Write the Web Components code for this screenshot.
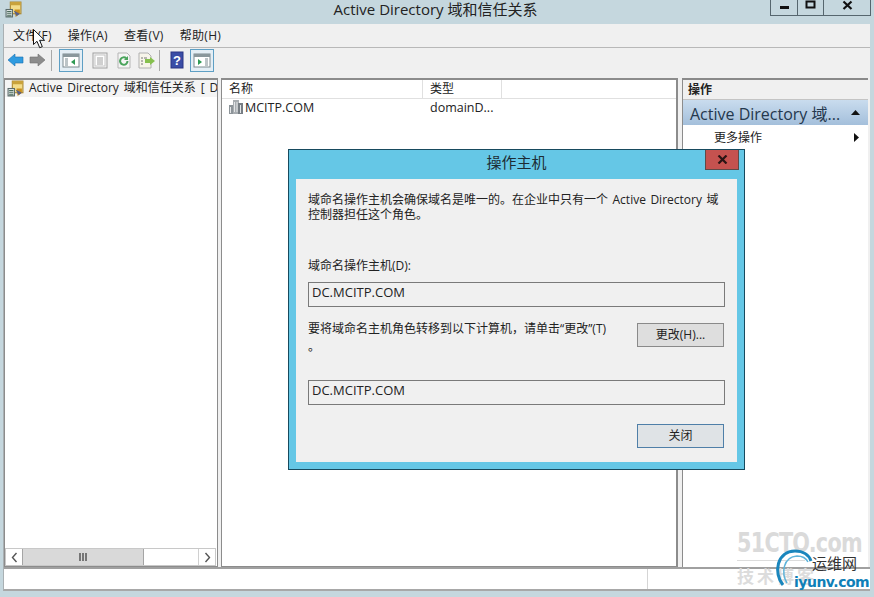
<!DOCTYPE html>
<html>
<head>
<meta charset="utf-8">
<title>Active Directory 域和信任关系</title>
<style>
  html, body { margin: 0; padding: 0; }
  body {
    width: 874px;
    height: 597px;
    overflow: hidden;
    position: relative;
    background: #c5d7de;
    color: #222;
    font: 12px "Open Sans", "Noto Sans CJK SC", sans-serif;
  }
</style>
</head>
<body>
<mmc-window>
  <tree-pane slot="left"></tree-pane>
  <list-pane slot="middle"></list-pane>
  <actions-pane slot="right"></actions-pane>
</mmc-window>

<fsmo-dialog>
  <p>域命名操作主机会确保域名是唯一的。在企业中只有一个 Active Directory 域控制器担任这个角色。</p>
</fsmo-dialog>

<blog-mark></blog-mark>
<mouse-cursor></mouse-cursor>

<script>
// snap-in icon, used in the caption and the tree
const adIcon = (s) => `<svg width="${s}" height="${s}" viewBox="0 0 16 16">
  <rect x="5" y="1" width="10" height="11" fill="#f3dc8a" stroke="#a8852e"/>
  <rect x="5" y="1" width="10" height="3" fill="#c9a23c"/>
  <path d="M9 8l5 0 0 4-4 3z" fill="#c98f1c"/>
  <path d="M8 9l6 3-3 2z" fill="#57608c"/>
  <rect x="1" y="8" width="6" height="7" fill="#dfe6e6" stroke="#5a6a6a"/>
  <path d="M2 10h4M2 12h4M2 14h4" stroke="#4a6a5a"/>
</svg>`;

class MmcWindow extends HTMLElement {
  constructor() {
    super();
    this.attachShadow({ mode: 'open' });
  }
  connectedCallback() {
    this.shadowRoot.innerHTML = `
    <style>
      :host { display: flex; flex-direction: column; width: 874px; height: 597px; }
      .caption { height: 24px; display: flex; position: relative; flex: none; }
      .caption .ico { margin: 1px 0 0 5px; height: 16px; }
      .caption .title {
        position: absolute; left: 0; right: 3px; top: 0; text-align: center;
        font-size: 15px; line-height: 19px; color: #222;
      }
      .caps {
        position: absolute; right: 3px; top: 0; height: 15px; display: flex;
        border: 1px solid #56666e; border-top: 0;
      }
      .caps div { display: flex; align-items: center; justify-content: center; border-left: 1px solid #56666e; height: 15px; }
      .caps div:first-child { border-left: 0; }
      .client {
        flex: 1; margin: 0 4px 6px 3px; display: flex; flex-direction: column;
        background: #f0f0f0; border-left: 1px solid #a9b0b3; border-bottom: 2px solid #a8a8a8; min-height: 0;
      }
      .menu {
        height: 21px; padding-bottom: 2px; flex: none; display: flex; gap: 16px; padding-left: 9px; align-items: center;
        border-bottom: 1px solid #b8b8b8; font-size: 12px; letter-spacing: .3px; color: #222;
      }
      .tools { height: 29px; padding-top: 1px; flex: none; display: flex; align-items: flex-start; padding-left: 2px; }
      .panes { flex: 1; display: flex; min-height: 0; }
      .left { width: 214px; flex: none; display: flex; }
      .mid { width: 457px; margin-left: 3px; flex: none; display: flex; }
      .right { width: 186px; margin-left: 4px; flex: none; display: flex; }
      ::slotted(*) { flex: 1; }
      .status { height: 20px; flex: none; background: #fff; border-top: 2px solid #a0a0a0; display: flex; justify-content: flex-end; }
      .status i { width: 222px; border-left: 1px solid #d5d5d5; }
      .sep { width: 1px; height: 21px; background: #a9a9a9; margin-top: 1px; flex: none; }
    </style>
    <div class="caption">
      <div class="ico">${adIcon(17)}</div>
      <div class="title">Active Directory 域和信任关系</div>
      <div class="caps">
        <div style="width:26px"><svg width="11" height="15"><rect x="1" y="6" width="9" height="3" fill="#111"/></svg></div>
        <div style="width:25px"><svg width="11" height="15"><rect x="1.5" y="1.5" width="8" height="6" fill="none" stroke="#111" stroke-width="2"/></svg></div>
        <div style="width:46px"><svg width="11" height="15"><path d="M1.5 1.5l8 7.5M9.5 1.5l-8 7.5" stroke="#111" stroke-width="2.2"/></svg></div>
      </div>
    </div>
    <div class="client">
      <div class="menu"><span>文件(F)</span><span>操作(A)</span><span>查看(V)</span><span>帮助(H)</span></div>
      <div class="tools">
        <tool-icon kind="back"></tool-icon>
        <tool-icon kind="forward" style="margin-left:-4px"></tool-icon>
        <div class="sep" style="margin-left:3px"></div>
        <tool-icon kind="tree" active style="margin-left:7px"></tool-icon>
        <tool-icon kind="props" style="margin-left:5px"></tool-icon>
        <tool-icon kind="refresh" style="margin-left:1px"></tool-icon>
        <tool-icon kind="export" style="margin-left:-1px"></tool-icon>
        <div class="sep" style="margin-left:2px"></div>
        <tool-icon kind="help" style="margin-left:5px"></tool-icon>
        <tool-icon kind="action" active style="margin-left:2px"></tool-icon>
      </div>
      <div class="panes">
        <div class="left"><slot name="left"></slot></div>
        <div class="mid"><slot name="middle"></slot></div>
        <div class="right"><slot name="right"></slot></div>
      </div>
      <div class="status"><i></i></div>
    </div>`;
  }
}
customElements.define('mmc-window', MmcWindow);

class ToolIcon extends HTMLElement {
  constructor() {
    super();
    this.attachShadow({ mode: 'open' });
  }
  connectedCallback() {
    const glyphs = {
      back: '<path d="M1 10l7-6v3h8v6H8v3z" fill="#2f9be0" stroke="#1a6fb0" stroke-width=".6"/>',
      forward: '<path d="M19 10l-7-6v3H4v6h8v3z" fill="#8c8c8c" stroke="#6e6e6e" stroke-width=".6"/>',
      tree: '<rect x="3" y="4" width="16" height="13" fill="#fff" stroke="#7d8a90"/><rect x="3" y="4" width="16" height="3" fill="#8a979c"/><path d="M5 9h3M5 11h3M5 13h3M5 15h3" stroke="#7a8a90"/><path d="M15 9l-4 3 4 3z" fill="#2f9a55"/>',
      props: '<rect x="4" y="3" width="14" height="15" fill="#f4f4f4" stroke="#a0a0a0"/><rect x="6" y="5" width="10" height="11" fill="#fff" stroke="#c5c5c5"/><path d="M8 8h6M8 10h6M8 12h6M8 14h6" stroke="#a0a0a0"/>',
      refresh: '<path d="M5 3h9l3 3v12H5z" fill="#f5f5f5" stroke="#b5b5b5"/><path d="M14.500 11a3.700 3.700 0 1 1-1.200-2.700" fill="none" stroke="#4aa45c" stroke-width="2"/><path d="M15 6v4h-4z" fill="#4aa45c"/>',
      export: '<path d="M4 3h9l3 3v12H4z" fill="#f7f5ea" stroke="#b0b0b0"/><path d="M6 8h2M6 11h2M6 14h2M9 8h3" stroke="#777"/><path d="M10 9h5V7l5 4-5 4v-2h-5z" fill="#86c04e"/>',
      help: '<rect x="5" y="2" width="12" height="16" fill="#3a4da6" stroke="#2a3584"/><text x="11" y="15" text-anchor="middle" font-family="Liberation Sans" font-size="13" font-weight="700" fill="#fff">?</text>',
      action: '<rect x="3" y="4" width="16" height="13" fill="#fff" stroke="#7d8a90"/><rect x="3" y="4" width="16" height="3" fill="#8a979c"/><path d="M14 9h3M14 11h3M14 13h3M14 15h3" stroke="#7a8a90"/><path d="M7 9l4 3-4 3z" fill="#2f9a55"/>',
    };
    const kind = this.getAttribute('kind');
    this.shadowRoot.innerHTML = `
    <style>
      :host { display: block; width: 23px; height: 23px; flex: none; }
      :host([active]) { width: 24px; background: #e4eef5; outline: 1px solid #5e9fc4; outline-offset: -1px; }
      svg { display: block; margin: 1px; }
    </style>
    <svg width="21" height="21" viewBox="0 0 21 21">${glyphs[kind] || ''}</svg>`;
  }
}
customElements.define('tool-icon', ToolIcon);

class TreePane extends HTMLElement {
  constructor() {
    super();
    this.attachShadow({ mode: 'open' });
  }
  connectedCallback() {
    this.shadowRoot.innerHTML = `
    <style>
      :host { display: flex; flex-direction: column; background: #fff; border: 1px solid #8c8c8c; border-top-width: 2px; box-sizing: border-box; overflow: hidden; }
      .row { display: flex; align-items: center; height: 17px; padding-left: 2px; gap: 5px; background: #f4f4f4; white-space: nowrap; font-size: 12px; flex: none; }
      .row svg { flex: none; }
      .row span { margin-top: -4px; word-spacing: 1.800px; }
      .fill { flex: 1; }
      .bar { height: 18px; box-sizing: border-box; margin-right: 1px; display: flex; border: 1px solid #c8c8c8; flex: none; }
      .arr { width: 16px; display: flex; align-items: center; justify-content: center; }
      .thumb { width: 122px; background: #d9d9d9; border-left: 1px solid #a5a5a5; border-right: 1px solid #a5a5a5; box-sizing: border-box; display: flex; align-items: center; justify-content: center; }
      .gap { flex: 1; }
      .arr.r { border-left: 1px solid #d0d0d0; }
    </style>
    <div class="row">${adIcon(17)}<span>Active Directory 域和信任关系 [ D</span></div>
    <div class="fill"></div>
    <div class="bar">
      <div class="arr"><svg width="7" height="11"><path d="M5.5 1L1.5 5.5 5.5 10" fill="none" stroke="#555" stroke-width="1.4"/></svg></div>
      <div class="thumb"><svg width="8" height="8"><path d="M1 0v8M4 0v8M7 0v8" stroke="#555" stroke-width="1.5"/></svg></div>
      <div class="gap"></div>
      <div class="arr r"><svg width="7" height="11"><path d="M1.5 1L5.5 5.5 1.5 10" fill="none" stroke="#555" stroke-width="1.4"/></svg></div>
    </div>`;
  }
}
customElements.define('tree-pane', TreePane);

class ListPane extends HTMLElement {
  constructor() {
    super();
    this.attachShadow({ mode: 'open' });
  }
  connectedCallback() {
    this.shadowRoot.innerHTML = `
    <style>
      :host { display: block; background: #fff; border: 1px solid #8c8c8c; border-top-width: 2px; border-bottom-width: 1px; border-right-width: 2px; box-sizing: border-box; }
      .head { display: flex; height: 18px; border-bottom: 1px solid #e0e0e0; font-size: 12px; align-items: center; }
      .head span { display: block; box-sizing: border-box; height: 18px; line-height: 17px; padding-left: 7px; border-right: 1px solid #e0e0e0; }
      .row { display: flex; align-items: center; height: 16px; font-size: 12.500px; }
      .name { width: 201px; padding-left: 6px; display: flex; align-items: center; gap: 1px; box-sizing: border-box; }
      .type { padding-left: 7px; }
    </style>
    <div class="head"><span style="width:201px">名称</span><span style="width:79px">类型</span></div>
    <div class="row">
      <div class="name">
        <svg width="16" height="16" viewBox="0 0 16 16">
          <rect x="1" y="6" width="5" height="9" fill="#8d9499"/>
          <rect x="5" y="1" width="6" height="14" fill="#a8adb1"/>
          <rect x="10" y="4" width="5" height="11" fill="#777e84"/>
          <path d="M6.500 3v10M9 3v10M2.500 8v6M12.500 6v8" stroke="#e4e6e8"/>
        </svg>
        <span>MCITP.COM</span>
      </div>
      <div class="type">domainD...</div>
    </div>`;
  }
}
customElements.define('list-pane', ListPane);

class ActionsPane extends HTMLElement {
  constructor() {
    super();
    this.attachShadow({ mode: 'open' });
  }
  connectedCallback() {
    this.shadowRoot.innerHTML = `
    <style>
      :host { display: block; background: #fff; border-left: 1px solid #8c8c8c; border-top: 2px solid #8a8a8a; box-sizing: border-box; }
      .head { height: 19px; line-height: 20px; padding-left: 5px; background: #f0f0f0; font-weight: 700; font-size: 12px; border-bottom: 1px solid #c4c4c4; }
      .group {
        height: 25px; display: flex; align-items: center; justify-content: space-between; padding: 0 8px 0 7px;
        background: linear-gradient(#c9dcee, #a4bfdb); font-size: 16px; color: #24384e;
      }
      .item { height: 24px; display: flex; align-items: center; justify-content: space-between; padding: 0 9px 0 31px; font-size: 12px; }
    </style>
    <div class="head">操作</div>
    <div class="group"><span>Active Directory 域...</span><svg width="9" height="5"><path d="M0 5L4.500 0 9 5z" fill="#111"/></svg></div>
    <div class="item"><span>更多操作</span><svg width="5" height="9"><path d="M0 0l5 4.500L0 9z" fill="#111"/></svg></div>`;
  }
}
customElements.define('actions-pane', ActionsPane);

class ValueField extends HTMLElement {
  constructor() {
    super();
    this.attachShadow({ mode: 'open' });
  }
  connectedCallback() {
    this.shadowRoot.innerHTML = `
    <style>
      :host { display: block; height: 25px; box-sizing: border-box; border: 1px solid #7a7a7a; padding-left: 3px; line-height: 19px; font-size: 13px; background: #f0f0f0; }
    </style>
    <slot></slot>`;
  }
}
customElements.define('value-field', ValueField);

class WinButton extends HTMLElement {
  constructor() {
    super();
    this.attachShadow({ mode: 'open' });
  }
  connectedCallback() {
    this.shadowRoot.innerHTML = `
    <style>
      :host { display: flex; width: 87px; height: 24px; box-sizing: border-box; flex: none; align-items: center; justify-content: center; padding-bottom: 2px; border: 1px solid #8a8a8a; background: #dedede; font-size: 12px; }
      :host([primary]) { border-color: #4f7fa8; background: #dfe3e6; }
    </style>
    <slot></slot>`;
  }
}
customElements.define('win-button', WinButton);

class FsmoDialog extends HTMLElement {
  constructor() {
    super();
    this.attachShadow({ mode: 'open' });
  }
  connectedCallback() {
    this.shadowRoot.innerHTML = `
    <style>
      :host {
        position: absolute; left: 288px; top: 149px; width: 457px; height: 321px; box-sizing: border-box;
        display: flex; flex-direction: column; background: #65c7e6; border: 1px solid #174a5e;
      }
      .head { height: 29px; flex: none; position: relative; text-align: center; font-size: 15px; line-height: 24px; color: #1d2c33; }
      .x {
        position: absolute; right: 5px; top: 0; width: 34px; height: 20px; box-sizing: border-box;
        background: #c5524f; border: 1px solid #5f4a48; border-top: 0; display: flex; align-items: center; justify-content: center;
      }
      .body { flex: 1; margin: 0 7px 7px 7px; padding: 0 12px; background: #f0f0f0; display: flex; flex-direction: column; font-size: 12px; color: #222; }
      .intro { margin-top: 13px; height: 56px; line-height: 15px; word-spacing: 1.400px; }
      ::slotted(p) { margin: 0; }
      .label { margin-top: 10px; height: 16px; line-height: 16px; }
      .f1 { margin-top: 8px; }
      .line { display: flex; justify-content: space-between; margin-top: 16px; height: 41px; }
      .line div { width: 305px; line-height: 18px; margin-top: -3px; }
      .f2 { margin-top: 16px; }
      .foot { display: flex; justify-content: flex-end; margin-top: 19px; padding-right: 1px; }
      .line win-button { margin-right: 1px; }
    </style>
    <div class="head">操作主机
      <div class="x"><svg width="11" height="9"><path d="M1.500 .5l8 8M9.500 .5l-8 8" stroke="#2a1414" stroke-width="2.200"/></svg></div>
    </div>
    <div class="body">
      <div class="intro"><slot></slot></div>
      <div class="label">域命名操作主机(D):</div>
      <value-field class="f1">DC.MCITP.COM</value-field>
      <div class="line">
        <div>要将域命名主机角色转移到以下计算机，请单击“更改”(T) 。</div>
        <win-button>更改(H)...</win-button>
      </div>
      <value-field class="f2">DC.MCITP.COM</value-field>
      <div class="foot"><win-button primary>关闭</win-button></div>
    </div>`;
  }
}
customElements.define('fsmo-dialog', FsmoDialog);

class BlogMark extends HTMLElement {
  constructor() {
    super();
    this.attachShadow({ mode: 'open' });
  }
  connectedCallback() {
    this.shadowRoot.innerHTML = `
    <style>
      :host { position: absolute; left: 730px; top: 526px; width: 144px; height: 71px; overflow: hidden; pointer-events: none; }
      span { position: absolute; white-space: nowrap; }
      .cto { left: 7px; top: 5px; font: 700 27px/24px "DejaVu Sans", sans-serif; letter-spacing: -1px; color: #dadada; transform: scaleX(.77); transform-origin: left; }
      .blog { left: 7px; top: 39px; font: 700 17px/22px "Noto Sans CJK SC", sans-serif; letter-spacing: 3px; color: #dcdcdc; }
      .yw { left: 82px; top: 29px; font: 15px/16px "Noto Sans CJK SC", sans-serif; color: #333; }
      .iy { left: 64px; top: 47px; font: 700 14px/18px "DejaVu Sans", sans-serif; color: #0f7fb8; letter-spacing: -.5px; }
      svg { position: absolute; left: 41px; top: 17px; }
      i { position: absolute; left: 7px; top: 34px; width: 68px; height: 1px; background: #dcdcdc; }
    </style>
    <span class="cto">51CTO.com</span>
    <i></i>
    <span class="blog">技术博客</span>
    <svg width="50" height="44" viewBox="0 0 50 44">
      <path d="M12 42C2 30 6 8 24 8c8 0 14 4 16 10" fill="none" stroke="#1a86bd" stroke-width="3"/>
      <path d="M16 40C10 30 12 14 26 13c5 0 9 2 11 6" fill="none" stroke="#5fb4da" stroke-width="1.500"/>
    </svg>
    <span class="yw">运维网</span>
    <span class="iy">iyunv.com</span>`;
  }
}
customElements.define('blog-mark', BlogMark);

class MouseCursor extends HTMLElement {
  constructor() {
    super();
    this.attachShadow({ mode: 'open' });
  }
  connectedCallback() {
    this.shadowRoot.innerHTML = `
    <style>:host { position: absolute; left: 33px; top: 29px; width: 14px; height: 20px; }</style>
    <svg width="14" height="20" viewBox="0 0 14 20">
      <path d="M.5 .5v15l3.500-3.200 2.700 6.400 2.600-1.100-2.700-6.300h5z" fill="#fff" stroke="#111"/>
    </svg>`;
  }
}
customElements.define('mouse-cursor', MouseCursor);
</script>
</body>
</html>
